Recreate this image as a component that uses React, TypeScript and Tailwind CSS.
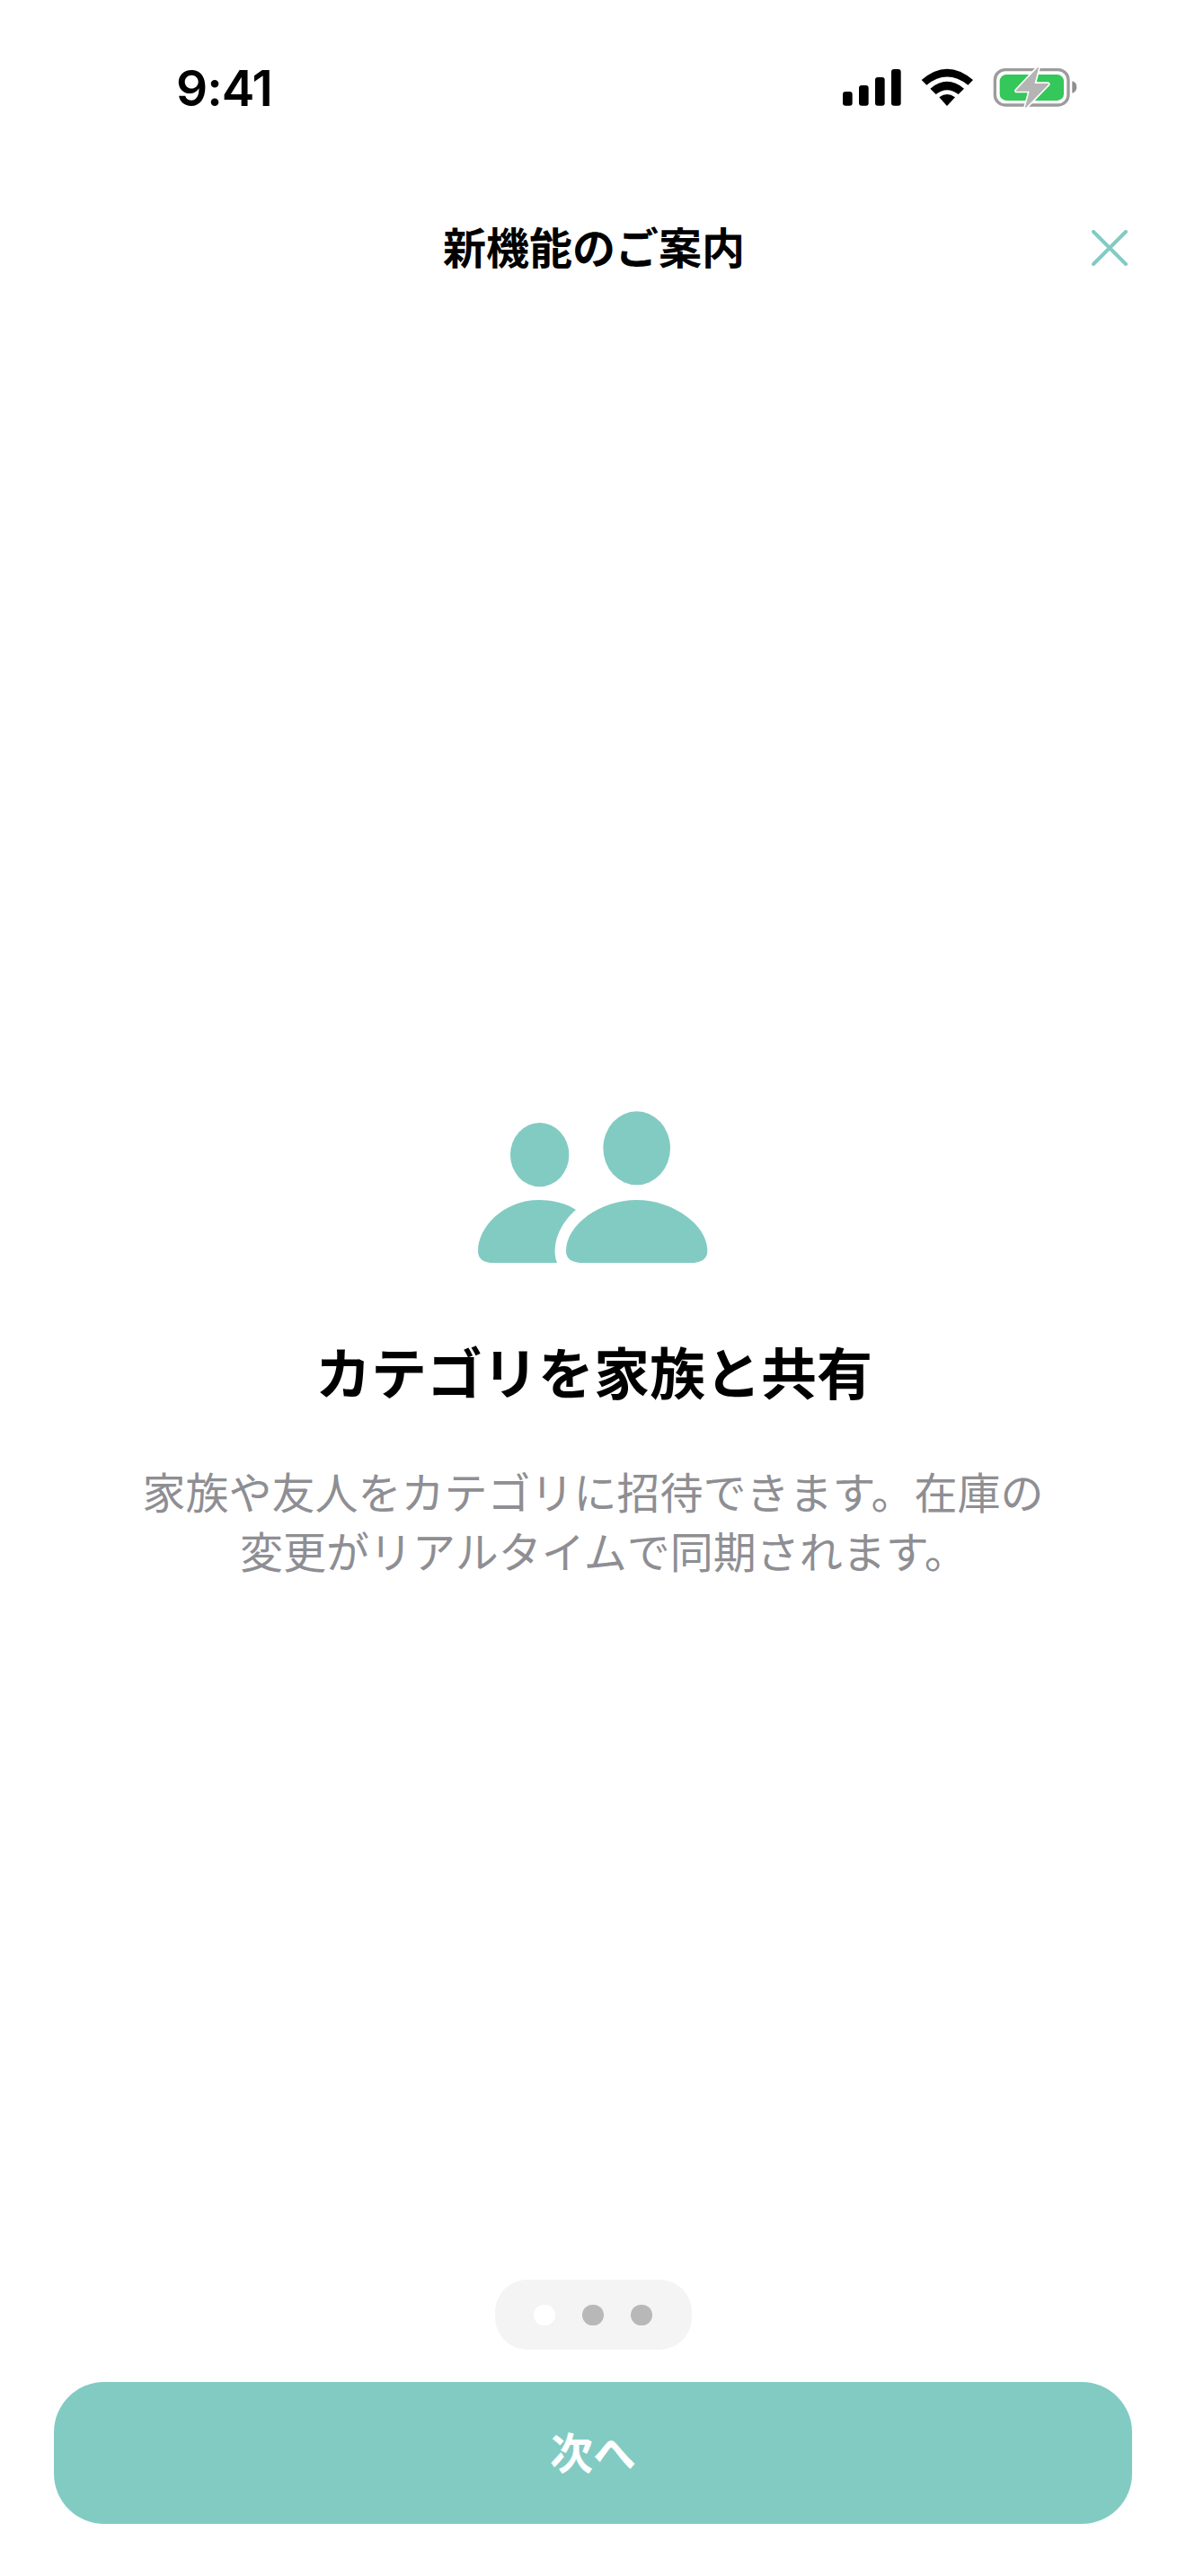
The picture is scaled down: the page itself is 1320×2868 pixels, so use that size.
import React from "react";

const sans = "font-['Noto_Sans_CJK_JP','Noto_Sans',sans-serif]";

function StatusIcons() {
  return (
    <svg width="267" height="53" viewBox="100 60 801 159" fill="none">
      <rect x="112" y="153" width="32" height="47" rx="9" fill="#000" />
      <rect x="166" y="132" width="32" height="68" rx="9" fill="#000" />
      <rect x="220" y="105" width="32" height="95" rx="9" fill="#000" />
      <rect x="274" y="78" width="32" height="122" rx="9" fill="#000" />
      <path d="M375 114 Q460 40 547 114 L530 131 Q460 76 392 131 Z" fill="#000" />
      <path d="M404 143 Q460 96 517 143 L498 162 Q460 134 423 162 Z" fill="#000" />
      <path d="M434 172 Q460 152 487 172 L460 201 Z" fill="#000" />
      <rect x="620" y="80" width="245" height="118" rx="34" stroke="#9c9c9c" strokeWidth="10" />
      <rect x="636" y="96" width="214" height="87" rx="22" fill="#34C759" />
      <path d="M878 118 Q893 122 893 138 Q893 154 878 158 Z" fill="#8f8f8f" />
      <path
        d="M764 74 L692 150 L738 150 L723 204 L797 128 L750 128 Z"
        fill="#b4b4b4"
        stroke="#fff"
        strokeWidth="14"
        strokeLinejoin="round"
        paintOrder="stroke"
      />
      <path d="M764 74 L692 150 L738 150 L723 204 L797 128 L750 128 Z" fill="#b4b4b4" stroke="#b4b4b4" strokeWidth="4" strokeLinejoin="round" />
    </svg>
  );
}

function CloseIcon() {
  return (
    <svg width="40" height="40" viewBox="0 0 40 40" fill="none">
      <path d="M2 2 L38 38 M38 2 L2 38" stroke="#82CBC3" strokeWidth="4" strokeLinecap="round" />
    </svg>
  );
}

function PeopleIcon() {
  return (
    <svg width="320" height="220" viewBox="0 0 960 660" fill="#82CBC3">
      <ellipse cx="302" cy="227" rx="98" ry="107" />
      <ellipse cx="626" cy="205" rx="112" ry="123" />
      <path d="M300 378 C350 378 392 390 423 411 C370 455 338 530 360 588 L150 588 C115 588 96 576 96 548 C96 470 180 378 300 378 Z" />
      <path d="M626 378 C745 378 862 460 862 548 C862 576 840 588 805 588 L450 588 C410 588 390 576 390 548 C390 460 505 378 626 378 Z" />
    </svg>
  );
}

export default function App() {
  return (
    <div className={`flex h-[2868px] w-[1320px] flex-col bg-white text-black ${sans}`}>
      <div className="flex h-[128px] items-start justify-between pl-[196px] pr-[119px] pt-[68px]">
        <span className="font-['Inter',sans-serif] text-[55px] leading-[60px] font-semibold tracking-[-1px]">9:41</span>
        <div className="mt-[3px]"><StatusIcons /></div>
      </div>

      <div className="mt-[97px] grid h-[96px] grid-cols-[1fr_auto_1fr] items-center">
        <div />
        <h1 className="pl-[2px] text-[48px] leading-[96px] font-bold">新機能のご案内</h1>
        <div className="flex justify-end pr-[65px] pt-[6px]"><CloseIcon /></div>
      </div>

      <div className="mt-[889px] flex flex-col items-center">
        <PeopleIcon />
        <h2 className="mt-[54px] pl-[2px] text-[62px] leading-[84px] font-bold">カテゴリを家族と共有</h2>
        <p className="mt-[58px] text-center text-[48px] leading-[66px] font-normal text-[#8e8e93]">
          家族や友人をカテゴリに招待できます。在庫の
          <br />
          <span className="inline-block pl-[24px]">変更がリアルタイムで同期されます。</span>
        </p>
      </div>

      <div className="mt-auto flex flex-col items-center px-[60px] pb-[58px]">
        <div className="flex h-[78px] w-[219px] items-center justify-center gap-[30px] rounded-[36px] bg-[#f4f4f4]">
          <span className="h-[23px] w-[24px] rounded-full bg-white" />
          <span className="h-[23px] w-[24px] rounded-full bg-[#b8b8b8]" />
          <span className="h-[23px] w-[24px] rounded-full bg-[#b8b8b8]" />
        </div>
        <button className="mt-[36px] flex h-[158px] w-full items-center justify-center rounded-[56px] bg-[#82CBC3] pb-[6px] text-[48px] font-bold text-white">
          次へ
        </button>
      </div>
    </div>
  );
}
